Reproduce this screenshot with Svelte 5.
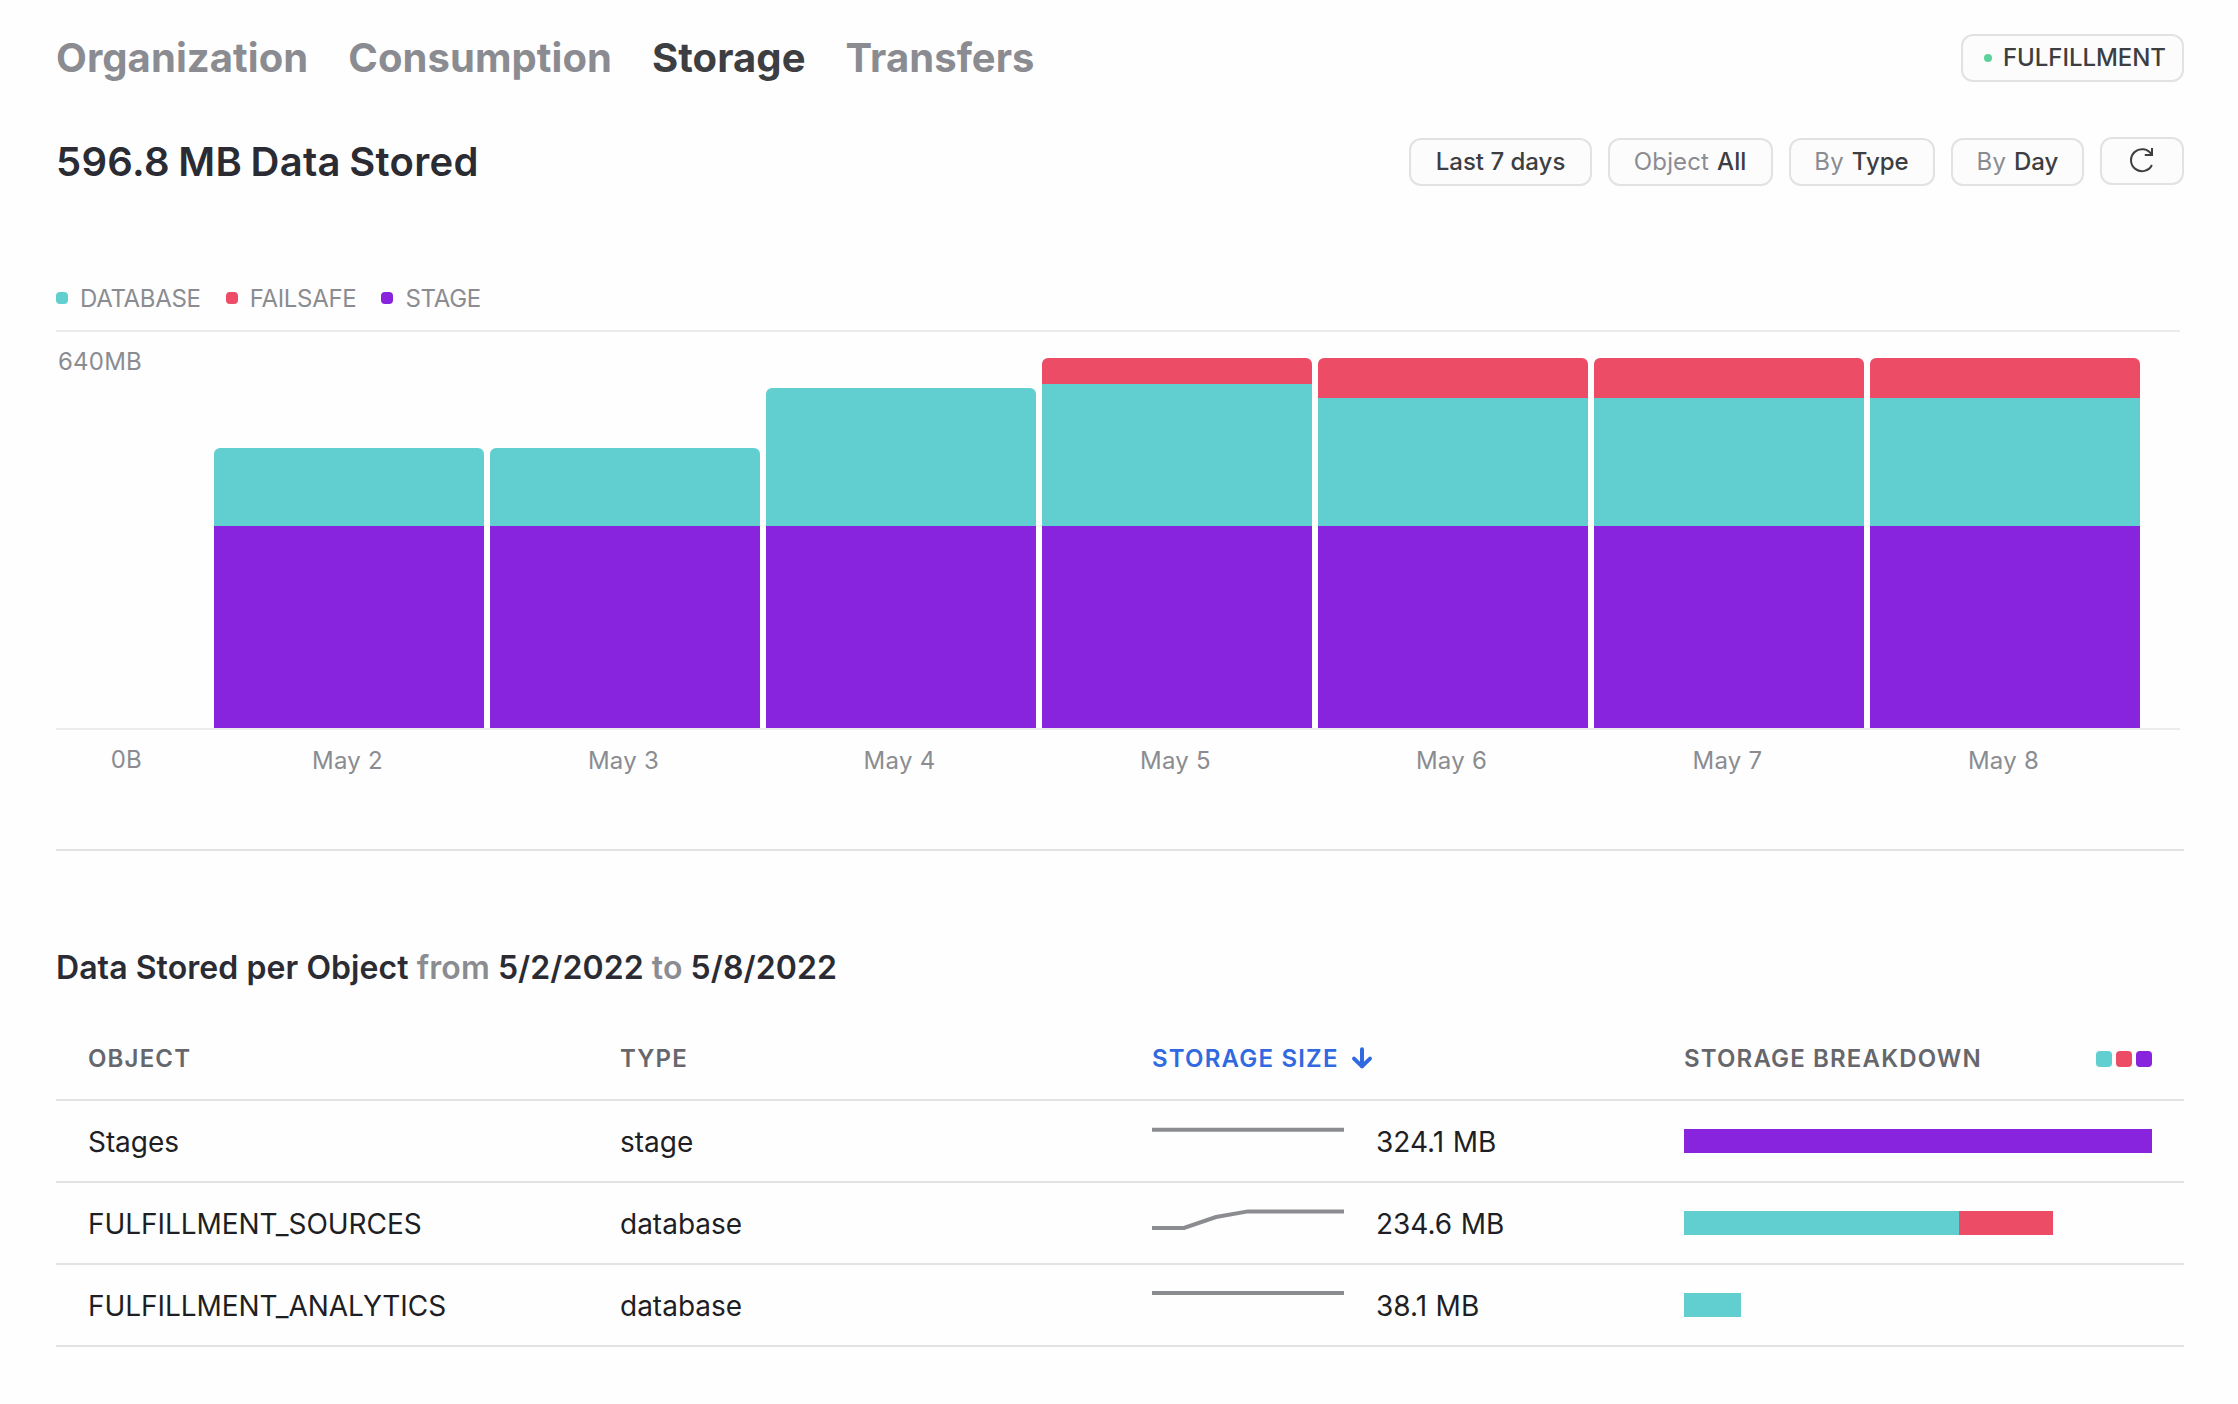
<script>
  const tabs = ['Organization', 'Consumption', 'Storage', 'Transfers'];
  const active = 'Storage';
  const filters = [
    { cls: 'range', label: '', value: 'Last 7 days' },
    { cls: 'object', label: 'Object', value: 'All' },
    { cls: 'type', label: 'By', value: 'Type' },
    { cls: 'day', label: 'By', value: 'Day' }
  ];
  const legend = [
    { name: 'DATABASE', kind: 'database' },
    { name: 'FAILSAFE', kind: 'failsafe' },
    { name: 'STAGE', kind: 'stage' }
  ];
  const days = [
    { day: 'May 2', failsafe: 0, database: 78, stage: 202 },
    { day: 'May 3', failsafe: 0, database: 78, stage: 202 },
    { day: 'May 4', failsafe: 0, database: 138, stage: 202 },
    { day: 'May 5', failsafe: 26, database: 142, stage: 202 },
    { day: 'May 6', failsafe: 40, database: 128, stage: 202 },
    { day: 'May 7', failsafe: 40, database: 128, stage: 202 },
    { day: 'May 8', failsafe: 40, database: 128, stage: 202 }
  ];
  const stack = ['failsafe', 'database', 'stage'];
  const rows = [
    { object: 'Stages', type: 'stage', size: '324.1 MB', points: '0,28.7 192,28.7', parts: [{ kind: 'stage', width: 468 }] },
    {
      object: 'FULFILLMENT_SOURCES', type: 'database', size: '234.6 MB',
      points: '0,45 32,45 64,34 96,28.4 192,28.4',
      parts: [{ kind: 'database', width: 275 }, { kind: 'failsafe', width: 94 }]
    },
    { object: 'FULFILLMENT_ANALYTICS', type: 'database', size: '38.1 MB', points: '0,28 192,28', parts: [{ kind: 'database', width: 57 }] }
  ];
</script>

<main>
  <header>
    <nav>
      {#each tabs as tab}
        <a class:active={tab === active}>{tab}</a>
      {/each}
    </nav>
    <button class="account"><i class="dot"></i>FULFILLMENT</button>
  </header>

  <section class="summary">
    <h1>596.8 MB Data Stored</h1>
    <div class="filters">
      {#each filters as f}
        <button class={f.cls}>{#if f.label}<span>{f.label}</span>{/if}{f.value}</button>
      {/each}
      <button class="refresh" aria-label="Refresh">
        <svg width="28" height="28" viewBox="0 0 28 28" fill="none" stroke="#3d3e42" stroke-width="2">
          <path d="M23.9 18A11 11 0 1 1 23.6 7.8" />
          <path d="M24 1V8H16.8" />
        </svg>
      </button>
    </div>
  </section>

  <section class="chart">
    <div class="legend">
      {#each legend as l}
        <span><i class={l.kind}></i>{l.name}</span>
      {/each}
    </div>
    <div class="plot">
      <div class="max">640MB</div>
      <div class="bars">
        {#each days as d}
          <div class="bar">
            {#each stack as k}
              {#if d[k]}<div class={k} style="height: {d[k]}px"></div>{/if}
            {/each}
          </div>
        {/each}
      </div>
    </div>
    <div class="axis">
      <div class="min">0B</div>
      {#each days as d}
        <div class="tick">{d.day}</div>
      {/each}
    </div>
  </section>

  <section class="objects">
    <h2>Data Stored per Object <span>from</span> 5/2/2022 <span>to</span> 5/8/2022</h2>
    <div class="row head">
      <div>OBJECT</div>
      <div>TYPE</div>
      <div class="sorted">
        STORAGE SIZE
        <svg width="24" height="24" viewBox="0 0 24 24" fill="none" stroke="#3069e0" stroke-width="4" stroke-linecap="round" stroke-linejoin="round">
          <path d="M12 2.2V19" /><path d="M4 11.6L12 19.4L20 11.6" />
        </svg>
      </div>
      <div class="last">
        STORAGE BREAKDOWN
        <span class="keys"><i class="database"></i><i class="failsafe"></i><i class="stage"></i></span>
      </div>
    </div>
    {#each rows as r}
      <div class="row">
        <div class="name">{r.object}</div>
        <div>{r.type}</div>
        <div class="size">
          <svg width="192" height="80" viewBox="0 0 192 80" fill="none" stroke="#8b8c90" stroke-width="4">
            <polyline points={r.points} />
          </svg>
          {r.size}
        </div>
        <div class="breakdown">
          {#each r.parts as p}<b class={p.kind} style="width: {p.width}px"></b>{/each}
        </div>
      </div>
    {/each}
  </section>
</main>

<style>
  :global(body) { background: #fefefe; }
  main {
    box-sizing: border-box;
    width: 2238px;
    height: 1404px;
    padding: 34px 54px 0 56px;
    overflow: hidden;
    font-family: Inter, "Liberation Sans", sans-serif;
    color: #1e1f24;
  }
  header, .summary { display: flex; justify-content: space-between; align-items: center; height: 48px; }
  nav { display: flex; gap: 40px; }
  nav a { font-size: 40px; font-weight: 700; line-height: 48px; color: #8b8c91; letter-spacing: .07px; }
  nav a.active { color: #3d3e42; }
  button {
    box-sizing: border-box;
    height: 48px;
    padding: 0;
    display: flex;
    align-items: center;
    justify-content: center;
    border: 2px solid #e2e2e2;
    border-radius: 12px;
    background: #fcfcfc;
    font: 500 24px/44px Inter, "Liberation Sans", sans-serif;
    color: #3d3e42;
    white-space: nowrap;
  }
  button span { color: #8b8c91; font-weight: 400; margin-right: 8px; letter-spacing: .15px; }
  .account { width: 223px; gap: 11px; padding-left: 5px; letter-spacing: -.05px; }
  .dot { width: 8px; height: 8px; border-radius: 50%; background: #5bd29a; }
  .summary { margin-top: 56px; }
  h1 { margin: 0; font-size: 40px; font-weight: 600; line-height: 48px; color: #2b2c33; word-spacing: -2px; letter-spacing: .3px; }
  .filters { display: flex; gap: 16px; }
  .range { width: 183px; }
  .object { width: 165px; padding-right: 1px; }
  .type { width: 146px; padding-right: 1px; }
  .day { width: 133px; }
  .refresh { width: 84px; margin-top: -1px; margin-bottom: 1px; }

  .database { background: #61cfd0; }
  .failsafe { background: #ec4c66; }
  .stage { background: #8823de; }

  .chart { height: 663px; border-bottom: 2px solid #e2e3e3; font-size: 24px; color: #8b8c91; }
  .legend { display: flex; gap: 25px; height: 144px; box-sizing: border-box; padding-top: 80px; letter-spacing: -.3px; }
  .legend span { display: flex; align-items: center; gap: 12px; }
  .legend i { width: 12px; height: 12px; border-radius: 4px; }
  .plot { display: flex; width: 2124px; height: 396px; border-top: 2px solid #ececec; border-bottom: 2px solid #ececec; }
  .max { width: 158px; box-sizing: border-box; padding: 14px 0 0 2px; line-height: 32px; letter-spacing: .2px; }
  .bars { display: flex; align-items: flex-end; gap: 6px; }
  .bar { width: 270px; border-radius: 6px 6px 0 0; overflow: hidden; }
  .axis { display: flex; padding-top: 14px; line-height: 34px; letter-spacing: .25px; }
  .min { width: 155px; box-sizing: border-box; padding-right: 69px; text-align: right; line-height: 32px; }
  .tick { width: 276px; box-sizing: border-box; padding-right: 3px; text-align: center; }

  h2 { margin: 97px 0 0; font-size: 32px; font-weight: 600; line-height: 40px; color: #2b2c33; letter-spacing: .07px; }
  h2 span { color: #8b8c91; }
  .row {
    box-sizing: border-box;
    display: grid;
    grid-template-columns: 532px 532px 532px 532px;
    height: 82px;
    border-bottom: 2px solid #e2e3e3;
    font-size: 28px;
    line-height: 82px;
  }
  .row > div { padding: 0 32px; display: flex; white-space: nowrap; height: 80px; }
  .row > .name { letter-spacing: -.07px; }
  .row > .size { word-spacing: .7px; }
  .head { margin-top: 31px; font-size: 24px; line-height: 80px; font-weight: 600; letter-spacing: 1.15px; color: #66676d; }
  .head > .sorted { color: #3069e0; align-items: center; gap: 11px; letter-spacing: 1.2px; }
  .head > .last { justify-content: space-between; }
  .keys { display: flex; align-items: center; gap: 4px; }
  .keys i { width: 16px; height: 16px; border-radius: 4px; }
  .size svg { margin-right: 32px; }
  .row > .breakdown { align-items: center; }
  .breakdown b { height: 24px; }
</style>
